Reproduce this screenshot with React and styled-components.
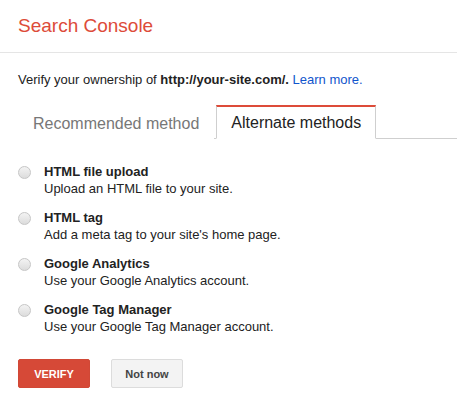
import React, { useState } from "react";
import styled, { createGlobalStyle } from "styled-components";

const GlobalStyle = createGlobalStyle`
  body {
    margin: 0;
    background: #fff;
    font-family: "Liberation Sans", Arial, sans-serif;
  }
`;

const Page = styled.div`
  width: 457px;
  min-height: 409px;
  background: #fff;
`;

const Header = styled.header`
  height: 53px;
  border-bottom: 1px solid #e5e5e5;
  display: flex;
  align-items: center;
  padding: 0 18px;
  box-sizing: border-box;
`;

const Title = styled.h1`
  margin: 0;
  font-size: 19px;
  font-weight: normal;
  color: #dd4b39;
`;

const Content = styled.div`
  padding: 0 0 0 18px;
`;

const Intro = styled.p`
  margin: 19px 0 0;
  font-size: 13px;
  color: #222;
  line-height: 16px;

  b {
    color: #222;
  }

  a {
    color: #1155cc;
    text-decoration: none;
  }
`;

const TabBar = styled.div`
  display: flex;
  margin-top: 17px;
  border-bottom: 1px solid #cfcfcf;
  height: 33px;
`;

const Tab = styled.button`
  font-family: inherit;
  font-size: 16px;
  background: #fff;
  cursor: pointer;
  padding: 1px 14px 0;
  margin-right: 2px;
  height: 34px;
  box-sizing: border-box;
  border: 1px solid ${(p) => (p.$active ? "#cfcfcf" : "transparent")};
  border-top: 2px solid ${(p) => (p.$active ? "#dd4b39" : "transparent")};
  border-bottom: ${(p) => (p.$active ? "1px solid #fff" : "none")};
  color: ${(p) => (p.$active ? "#222" : "#777")};
`;

const Options = styled.div`
  display: flex;
  flex-direction: column;
  gap: 13px;
  margin-top: 25px;
`;

const Option = styled.label`
  display: flex;
  gap: 13px;
  align-items: flex-start;
  cursor: pointer;
`;

const Radio = styled.span`
  width: 13px;
  height: 13px;
  border-radius: 50%;
  margin-top: 2px;
  box-sizing: border-box;
  border: 1px solid #c6c6c6;
  background: linear-gradient(#f3f3f3, #dcdcdc);
  flex: none;
`;

const OptionText = styled.div`
  display: flex;
  flex-direction: column;
  font-size: 13px;
  line-height: 16px;
  color: #222;
`;

const OptionTitle = styled.span`
  font-weight: bold;
  margin-bottom: 1px;
`;

const Actions = styled.div`
  display: flex;
  gap: 21px;
  margin-top: 24px;
`;

const Button = styled.button`
  font-family: inherit;
  font-size: 11px;
  font-weight: bold;
  height: 29px;
  width: 72px;
  border-radius: 2px;
  cursor: pointer;
  border: 1px solid ${(p) => (p.$primary ? "#d14836" : "#dcdcdc")};
  background: ${(p) => (p.$primary ? "#d64937" : "#f3f3f3")};
  color: ${(p) => (p.$primary ? "#fff" : "#444")};
`;

const methods = [
  { title: "HTML file upload", text: "Upload an HTML file to your site." },
  { title: "HTML tag", text: "Add a meta tag to your site's home page." },
  { title: "Google Analytics", text: "Use your Google Analytics account." },
  { title: "Google Tag Manager", text: "Use your Google Tag Manager account." },
];

export default function App() {
  const [tab, setTab] = useState(1);

  return (
    <Page>
      <GlobalStyle />
      <Header>
        <Title>Search Console</Title>
      </Header>
      <Content>
        <Intro>
          Verify your ownership of <b>http://your-site.com/.</b>{" "}
          <a href="#">Learn more.</a>
        </Intro>
        <TabBar>
          <Tab $active={tab === 0} onClick={() => setTab(0)}>
            Recommended method
          </Tab>
          <Tab $active={tab === 1} onClick={() => setTab(1)}>
            Alternate methods
          </Tab>
        </TabBar>
        <Options>
          {methods.map((m) => (
            <Option key={m.title}>
              <Radio />
              <OptionText>
                <OptionTitle>{m.title}</OptionTitle>
                <span>{m.text}</span>
              </OptionText>
            </Option>
          ))}
        </Options>
        <Actions>
          <Button $primary>VERIFY</Button>
          <Button>Not now</Button>
        </Actions>
      </Content>
    </Page>
  );
}
